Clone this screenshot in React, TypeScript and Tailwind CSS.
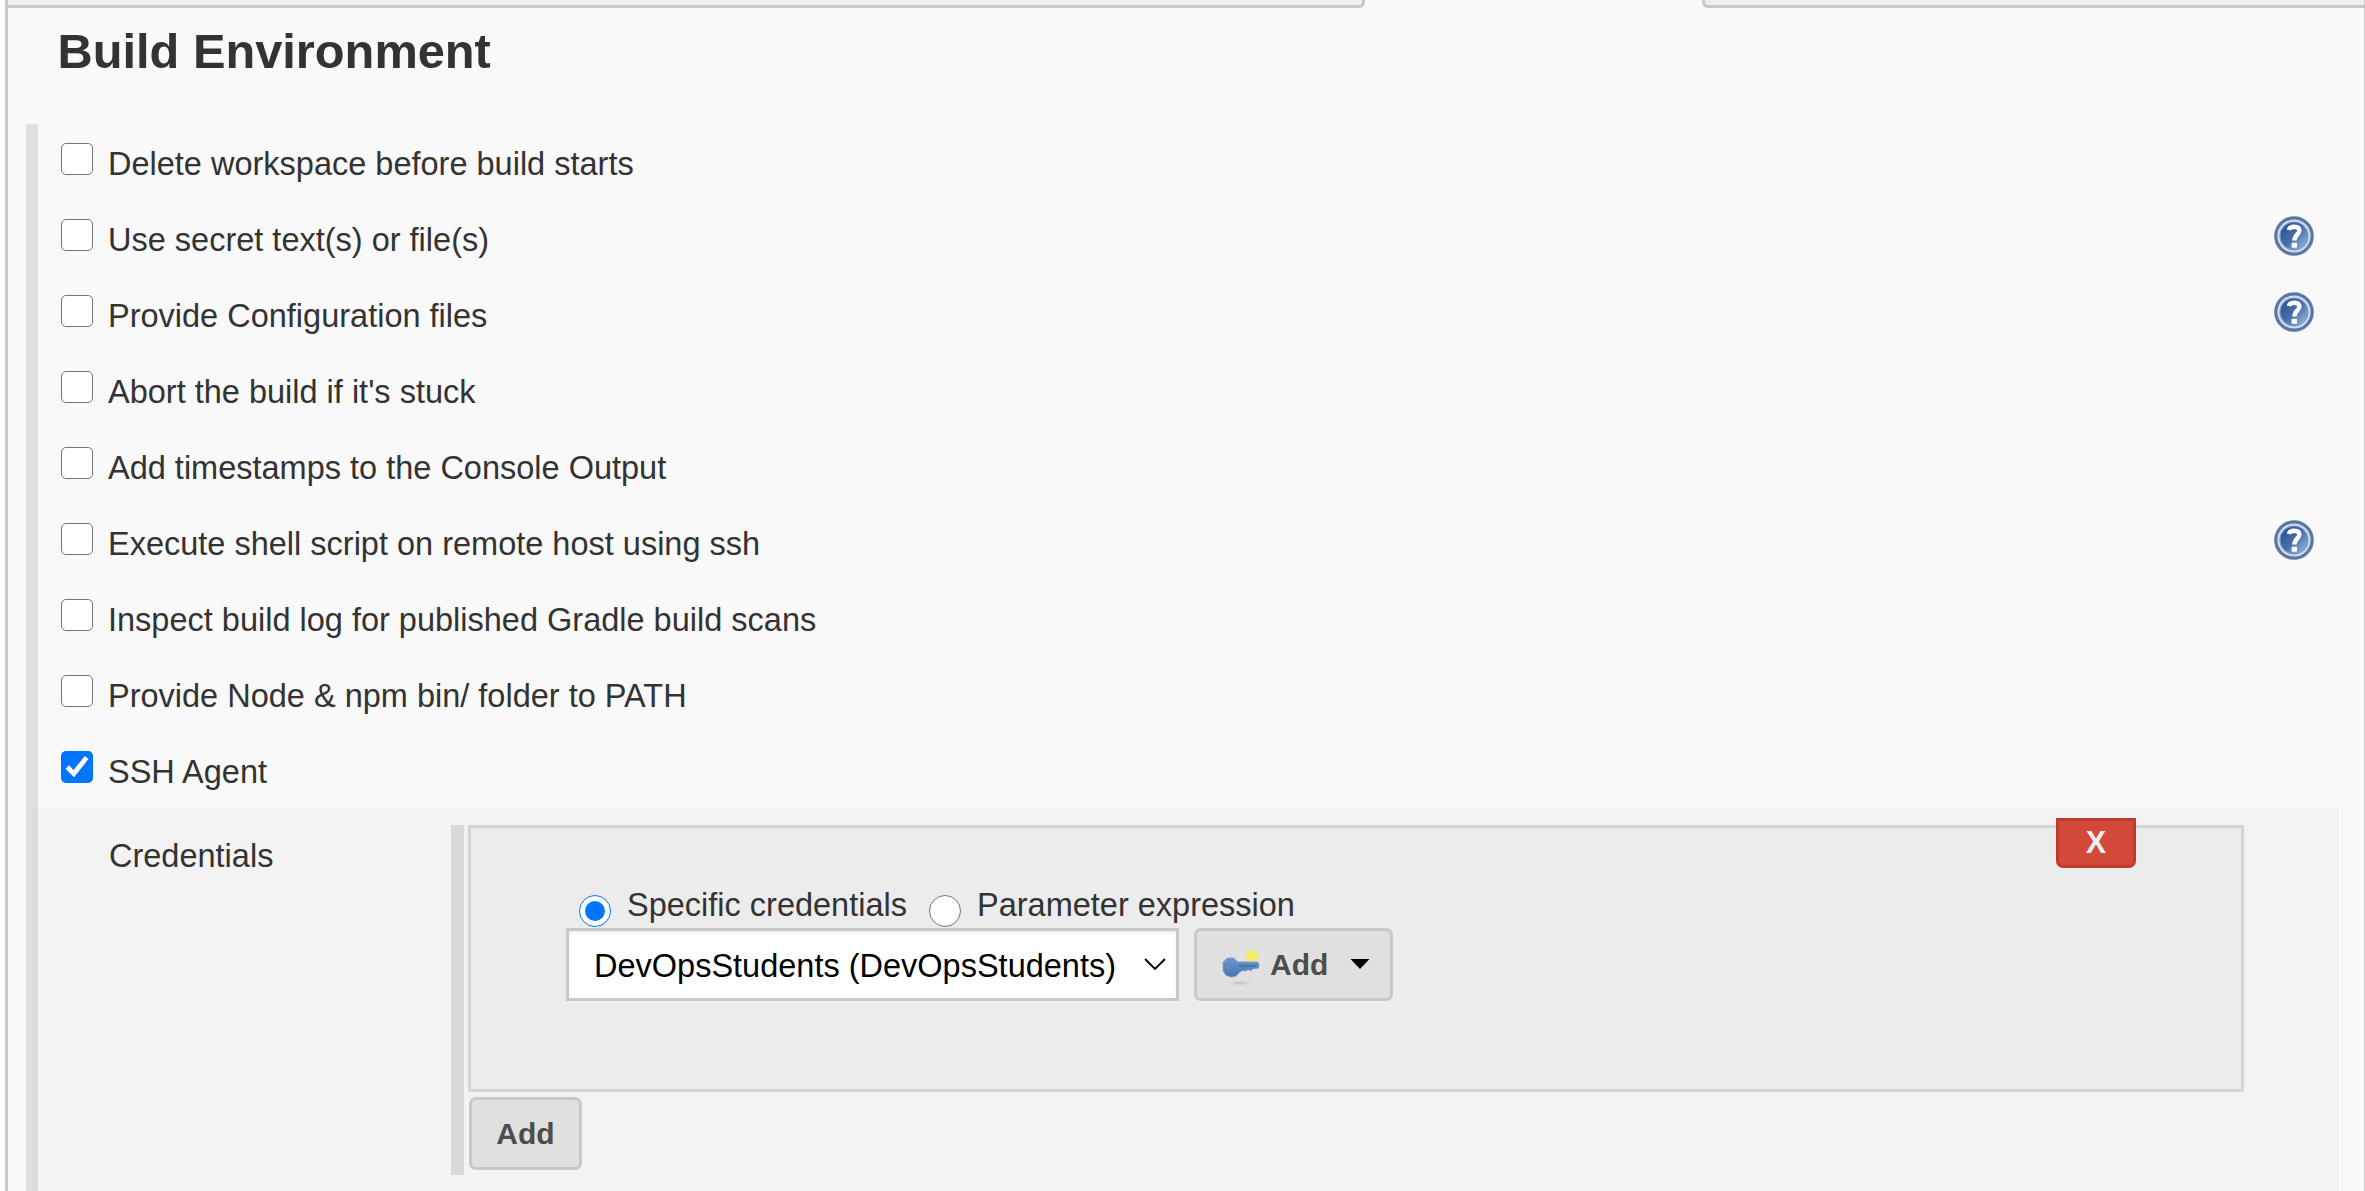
import React from "react";

const ROWS: { label: string; help?: boolean; checked?: boolean }[] = [
  { label: "Delete workspace before build starts" },
  { label: "Use secret text(s) or file(s)", help: true },
  { label: "Provide Configuration files", help: true },
  { label: "Abort the build if it's stuck" },
  { label: "Add timestamps to the Console Output" },
  { label: "Execute shell script on remote host using ssh", help: true },
  { label: "Inspect build log for published Gradle build scans" },
  { label: "Provide Node & npm bin/ folder to PATH" },
  { label: "SSH Agent", checked: true },
];

function Checkbox({ checked }: { checked?: boolean }) {
  if (!checked) {
    return <span className="block size-8 shrink-0 rounded-[5px] border border-[#767676] bg-white" />;
  }
  return (
    <span className="block size-8 shrink-0 rounded-[5px] bg-[#0075ff]">
      <svg viewBox="0 0 32 32" className="block size-8" fill="none" stroke="#fff" strokeWidth="4.8">
        <path d="M6.2 16 L12.8 22.6 L25.6 6.6" />
      </svg>
    </span>
  );
}

function Radio({ checked }: { checked?: boolean }) {
  return checked ? (
    <span className="flex size-8 shrink-0 items-center justify-center rounded-full border border-[#0075ff] bg-white">
      <span className="block size-5 rounded-full bg-[#0075ff]" />
    </span>
  ) : (
    <span className="block size-8 shrink-0 rounded-full border border-[#767676] bg-white" />
  );
}

function HelpIcon() {
  return (
    <svg viewBox="0 0 40 40" className="block size-10 shrink-0">
      <defs>
        <linearGradient id="helpDisc" x1="0.1" y1="0.1" x2="0.9" y2="0.9">
          <stop offset="0" stopColor="#2c5195" />
          <stop offset="0.5" stopColor="#466da9" />
          <stop offset="1" stopColor="#95b1d9" />
        </linearGradient>
      </defs>
      <circle cx="20" cy="20" r="18.2" fill="#cfdff3" stroke="#5b76a2" strokeWidth="3.2" />
      <circle cx="20" cy="20" r="14" fill="url(#helpDisc)" stroke="#7f9ac6" strokeWidth="1.2" />
      <path
        d="M14.8 14 C15.4 11.6 17.6 10.8 20.4 10.8 C23.4 10.8 25.4 12 25.4 14.6 C25.4 18.4 20.4 18.6 20.4 24.6"
        fill="none"
        stroke="#fff"
        strokeWidth="4.4"
      />
      <rect x="17.6" y="26.8" width="5.4" height="5" rx="1" fill="#fff" />
    </svg>
  );
}

function KeyIcon() {
  return (
    <svg viewBox="0 0 40 40" className="block size-10 shrink-0 overflow-visible">
      <defs>
        <radialGradient id="keyGlow">
          <stop offset="0" stopColor="#fbf063" />
          <stop offset="0.7" stopColor="#f3ea6c" />
          <stop offset="1" stopColor="#eee98a" stopOpacity="0" />
        </radialGradient>
        <radialGradient id="keyShade">
          <stop offset="0" stopColor="#bababa" />
          <stop offset="1" stopColor="#dddddd" stopOpacity="0" />
        </radialGradient>
        <linearGradient id="keyBody" x1="0" y1="0" x2="0" y2="1">
          <stop offset="0" stopColor="#6b96cb" />
          <stop offset="1" stopColor="#4475b6" />
        </linearGradient>
      </defs>
      <ellipse cx="18.5" cy="38" rx="16" ry="3.2" fill="url(#keyShade)" />
      <circle cx="31" cy="11.5" r="7.6" fill="url(#keyGlow)" />
      <path
        d="M6 13.4 L12.4 13 L16.6 17 L36.5 17.2 L38 19 L37.4 23 L32 23.4 L30 25.6 L27.4 24.4 L24.6 25.8 L21.6 25.4 L18 27.4 L15.4 30.8 L10 32 L5 30 L2.2 25.6 L2.2 17.6 Z"
        fill="url(#keyBody)"
        stroke="#6a92c6"
        strokeWidth="1"
        strokeLinejoin="round"
      />
      <path d="M18 20.8 H35" stroke="#3f6eac" strokeWidth="1.4" />
      <circle cx="7" cy="22" r="2.4" fill="#6d87a6" />
    </svg>
  );
}

export default function App() {
  return (
    <div className="h-[1191px] w-[2365px] overflow-hidden bg-white pl-[5px] font-['Liberation_Sans',Arial,sans-serif] text-[32.5px] leading-[38px] text-[#333]">
      <div className="flex h-full flex-col border-r border-l-[3px] border-r-[#c8c8c8] border-l-[#c8c8c8] bg-[#f9f9f9]">
        <div className="flex h-2 shrink-0 justify-between">
          <div className="w-[1357px] rounded-br-[6px] border-r-[3px] border-b-[3px] border-[#c8c8c8] bg-[#eee]" />
          <div className="w-[662px] rounded-bl-[6px] border-b-[3px] border-l-[3px] border-[#c8c8c8] bg-[#eee]" />
        </div>

        <h2 className="mt-[15px] mb-[45px] ml-[49.5px] h-14 shrink-0 text-[48.75px] leading-[56px] font-bold">
          Build Environment
        </h2>

        <div className="ml-[18px] flex min-h-0 flex-1">
          <div className="flex w-3 shrink-0 flex-col bg-[#e0e0e0]">
            <div className="mt-[684px] ml-1.5 flex-1 bg-[#d9d9d9]" />
          </div>

          <div className="flex-1">
            {ROWS.map((row) => (
              <div key={row.label} className="flex h-[76px] items-start pr-[50px] pl-[23px]">
                <div className="mt-[19px]">
                  <Checkbox checked={row.checked} />
                </div>
                <span className="mt-[21px] ml-[15px] flex-1 whitespace-nowrap">{row.label}</span>
                {row.help && (
                  <div className="mt-4">
                    <HelpIcon />
                  </div>
                )}
              </div>
            ))}

            <div className="mr-[25px] flex h-[383px] items-start bg-[#f3f3f3] pt-[17px]">
              <span className="mt-3 ml-[71px] w-[342px]">Credentials</span>
              <div className="h-[350px] w-[13px] shrink-0 bg-[#d9d9d9]" />
              <div className="ml-1">
                <div className="relative h-[267px] w-[1776px] border-[3px] border-[#d5d5d5] bg-[#ececec] pt-[60px] pl-[95px]">
                  <button className="absolute top-[-10px] right-[105px] flex h-[50px] w-20 items-center justify-center rounded-b-[7px] border-[3px] border-[#c03a2b] bg-[#d24939] pb-[2px] text-[30.5px] leading-[36px] font-bold text-[#f3eeee]">
                    X
                  </button>
                  <div className="flex h-10 items-start pl-[13px]">
                    <div className="mt-[7px]">
                      <Radio checked />
                    </div>
                    <span className="-mt-0.5 ml-4 whitespace-nowrap">Specific credentials</span>
                    <div className="mt-[7px] ml-[22px]">
                      <Radio />
                    </div>
                    <span className="-mt-0.5 ml-4 whitespace-nowrap">Parameter expression</span>
                  </div>
                  <div className="flex">
                    <div className="flex h-[73px] w-[613px] items-center justify-between border-[3px] border-[#c8c8c8] bg-white pr-[10px] pl-[25px] text-black shadow-[inset_0_2px_3px_rgba(0,0,0,0.07)]">
                      <span className="mt-0.5 whitespace-nowrap">DevOpsStudents (DevOpsStudents)</span>
                      <svg viewBox="0 0 22 13" className="-mt-[1px] block h-[13px] w-[22px]" fill="none" stroke="#000" strokeWidth="1.9">
                        <path d="M1 1 L11 11 L21 1" />
                      </svg>
                    </div>
                    <button className="ml-[15px] flex h-[73px] w-[199px] items-center rounded-[7px] border-[3px] border-[#c8c8c8] bg-[#e0e0e0] pl-[24px] text-[30px] leading-[36px] font-bold text-[#4d4d4d]">
                      <KeyIcon />
                      <span className="ml-[9px]">Add</span>
                      <svg viewBox="0 0 20 12" className="-mt-[2px] ml-[22px] block h-3 w-5">
                        <path d="M0.5 1 H19.5 L10 11 Z" fill="#000" />
                      </svg>
                    </button>
                  </div>
                </div>
                <button className="mt-[5px] ml-px flex h-[73px] w-[113px] items-center justify-center rounded-[7px] border-[3px] border-[#c8c8c8] bg-[#e0e0e0] text-[30px] leading-[36px] font-bold text-[#4d4d4d]">
                  Add
                </button>
              </div>
            </div>
          </div>
        </div>
      </div>
    </div>
  );
}
